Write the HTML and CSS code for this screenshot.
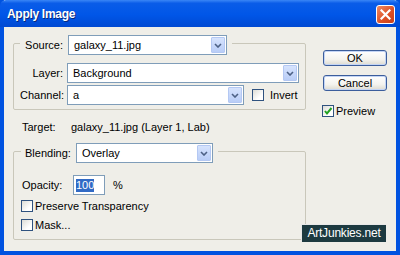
FILE: index.html
```html
<!DOCTYPE html>
<html lang="en">
<head>
  <meta charset="UTF-8">
  <title>Apply Image</title>
  <link rel="stylesheet" href="styles.css">
</head>
<body>
  <div class="window">
    <div class="titlebar">
      <span class="title">Apply Image</span>
      <span class="close">
        <svg width="11" height="11" viewBox="0 0 11 11"><path d="M1.5 1.5 L9.5 9.5 M9.5 1.5 L1.5 9.5" stroke="#fff" stroke-width="2.2" stroke-linecap="square"/></svg>
      </span>
    </div>

    <div class="content">
      <div class="main">
        <fieldset class="group source">
          <legend>
            <span class="lbl">Source:</span>
            <div class="select w-source"><span>galaxy_11.jpg</span><span class="arrow"><svg width="8" height="5" viewBox="0 0 8 5"><path d="M1 1 L4 4 L7 1" fill="none" stroke="#4d6185" stroke-width="1.6"/></svg></span></div>
          </legend>
          <div class="row">
            <span class="lbl">Layer:</span>
            <div class="select w-layer"><span>Background</span><span class="arrow"><svg width="8" height="5" viewBox="0 0 8 5"><path d="M1 1 L4 4 L7 1" fill="none" stroke="#4d6185" stroke-width="1.6"/></svg></span></div>
          </div>
          <div class="row">
            <span class="lbl">Channel:</span>
            <div class="select w-channel"><span>a</span><span class="arrow"><svg width="8" height="5" viewBox="0 0 8 5"><path d="M1 1 L4 4 L7 1" fill="none" stroke="#4d6185" stroke-width="1.6"/></svg></span></div>
            <span class="check invert"></span><span class="check-text">Invert</span>
          </div>
        </fieldset>

        <div class="target">
          <span class="target-lbl">Target:</span>
          <span>galaxy_11.jpg (Layer 1, Lab)</span>
        </div>

        <fieldset class="group blend">
          <legend>
            <span class="blend-lbl">Blending:</span>
            <div class="select w-blend"><span>Overlay</span><span class="arrow"><svg width="8" height="5" viewBox="0 0 8 5"><path d="M1 1 L4 4 L7 1" fill="none" stroke="#4d6185" stroke-width="1.6"/></svg></span></div>
          </legend>
          <div class="row opacity">
            <span class="opacity-lbl">Opacity:</span>
            <div class="input"><span class="sel">100</span></div>
            <span class="pct">%</span>
          </div>
          <div class="check-row first"><span class="check"></span><span class="check-text">Preserve Transparency</span></div>
          <div class="check-row"><span class="check"></span><span class="check-text">Mask...</span></div>
        </fieldset>
      </div>

      <div class="side">
        <button class="btn">OK</button>
        <button class="btn cancel">Cancel</button>
        <div class="check-row preview">
          <span class="check on">
            <svg width="10" height="10" viewBox="0 0 10 10"><path d="M2 5 L4 7.5 L8.5 2" fill="none" stroke="#21a121" stroke-width="2"/></svg>
          </span>
          <span class="check-text">Preview</span>
        </div>
      </div>
    </div>

    <div class="watermark">ArtJunkies.net</div>
  </div>
</body>
</html>
```

FILE: styles.css
```css
body {
  margin: 0;
  font-family: 'Liberation Sans', Arial, sans-serif;
  font-size: 11px;
  color: #000;
  background: #ffffff;
}

.window {
  position: relative;
  width: 400px;
  height: 255px;
  box-sizing: border-box;
  background: #efeee8;
  border: 4px solid #0052e0;
  border-top: none;
}

.titlebar {
  display: flex;
  align-items: center;
  justify-content: space-between;
  height: 27px;
  margin: 0 -4px;
  padding: 0 5px 0 7px;
  background: linear-gradient(to bottom, #3a86f6 0%, #0a5ce8 12%, #0056e8 55%, #0049d2 100%);
  border-radius: 6px 6px 0 0;
}

.title {
  color: #fff;
  font-weight: bold;
  font-size: 12px;
  letter-spacing: -0.3px;
  text-shadow: 1px 1px 0 #0a2a7a;
  margin-top: 1px;
}

.close {
  display: flex;
  align-items: center;
  justify-content: center;
  width: 17px;
  height: 17px;
  background: linear-gradient(135deg, #f08a62 0%, #dc4e24 60%, #c8401a 100%);
  border: 1px solid #fff;
  border-radius: 3px;
  margin-top: 2px;
}

.content {
  display: flex;
  padding: 4px 0 0 9px;
}

.main {
  width: 293px;
}

/* group boxes */
.group {
  margin: 0;
  border: 1px solid #c9c7ba;
  border-radius: 2px;
  box-sizing: border-box;
  width: 293px;
}

.group legend {
  display: flex;
  align-items: center;
  padding: 4px 5px 0 0;
}

.source {
  padding: 8px 0 2px 6px;
}

.blend {
  margin-top: 5px;
  padding: 12px 0 5px 7px;
}

.blend legend {
  padding-left: 4px;
}

.row {
  display: flex;
  align-items: center;
  gap: 4px;
  margin-bottom: 2px;
}

.lbl {
  width: 43px;
  text-align: right;
}

.source legend .lbl {
  margin-right: 1px;
}

.blend-lbl {
  margin-right: 5px;
}

/* dropdowns */
.select {
  display: flex;
  align-items: center;
  justify-content: space-between;
  height: 20px;
  box-sizing: border-box;
  border: 1px solid #7f9db9;
  background: #fff;
  padding: 1px 1px 1px 5px;
}

.source legend .select {
  margin-left: 4px;
}

.w-source { width: 159px; }
.w-layer { width: 232px; }
.w-channel { width: 177px; }
.w-blend { width: 137px; }

.arrow {
  display: flex;
  align-items: center;
  justify-content: center;
  width: 14px;
  height: 16px;
  box-sizing: border-box;
  background: linear-gradient(to bottom, #d6e3fd, #b9cdf7);
  border: 1px solid #b4c8f3;
  border-radius: 1px;
}

/* checkboxes */
.check {
  display: inline-flex;
  align-items: center;
  justify-content: center;
  width: 12px;
  height: 12px;
  box-sizing: border-box;
  border: 1px solid #2f527f;
  background: linear-gradient(135deg, #dcdcd6, #ffffff 70%);
}

.invert {
  margin-left: 4px;
}

.check-text {
  margin-left: 2px;
}

.check-row {
  display: flex;
  align-items: center;
  height: 19px;
}

.check-row.first {
  margin-top: 1px;
}

/* target */
.target {
  display: flex;
  margin-top: 11px;
  padding-left: 9px;
  line-height: 13px;
}

.target-lbl {
  width: 49px;
}

/* opacity */
.opacity {
  gap: 0;
  margin-bottom: 0;
}

.opacity-lbl {
  width: 51px;
  margin-left: 1px;
}

.input {
  display: flex;
  align-items: center;
  width: 32px;
  height: 20px;
  box-sizing: border-box;
  border: 1px solid #7f9db9;
  background: #fff;
  padding-left: 2px;
}

.sel {
  background: #316ac5;
  color: #fff;
  line-height: 13px;
}

.pct {
  margin-left: 8px;
}

/* buttons */
.side {
  display: flex;
  flex-direction: column;
  margin: 19px 0 0 17px;
}

.btn {
  width: 64px;
  height: 16px;
  padding: 0;
  font-family: 'Liberation Sans', Arial, sans-serif;
  font-size: 11px;
  color: #000;
  border: 1px solid #3c5e9c;
  border-radius: 3px;
  background: linear-gradient(to bottom, #ffffff 0%, #f4f3ee 60%, #dcdad0 100%);
  box-shadow: inset 0 0 0 1px #c4d5f5;
}

.cancel {
  margin-top: 9px;
}

.preview {
  margin: 13px 0 0 -1px;
  height: 13px;
}

/* watermark */
.watermark {
  position: absolute;
  left: 297px;
  top: 224px;
  width: 85px;
  height: 18px;
  box-sizing: border-box;
  background: #1d3a40;
  border-top: 1px solid #e8e8e8;
  border-left: 1px solid #e8e8e8;
  color: #fff;
  font-size: 12px;
  letter-spacing: -0.2px;
  line-height: 17px;
  text-align: center;
}
```
